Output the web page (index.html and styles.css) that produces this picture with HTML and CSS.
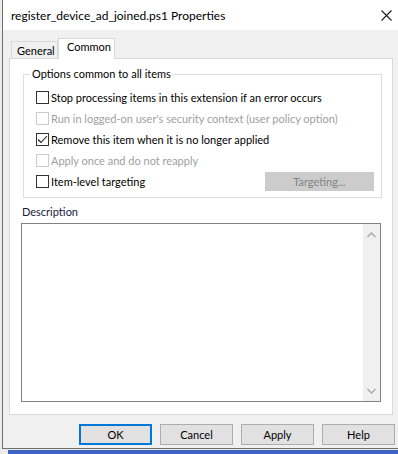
FILE: index.html
```html
<!DOCTYPE html>
<html lang="en">
<head>
    <meta charset="UTF-8">
    <meta name="viewport" content="width=device-width, initial-scale=1.0">
    <title>register_device_ad_joined.ps1 Properties</title>
    <link rel="stylesheet" href="styles.css">
</head>
<body>
    <div class="window">
        <div class="titlebar">
            <span class="title">register_device_ad_joined.ps1 Properties</span>
            <svg class="close" width="11" height="11" viewBox="0 0 11 11">
                <path d="M0.5 0.5 L10.5 10.5 M10.5 0.5 L0.5 10.5" stroke="#1a1a1a" stroke-width="1.1" fill="none"/>
            </svg>
        </div>
        <div class="main">
            <div class="tabs">
                <div class="tab">General</div>
                <div class="tab active">Common</div>
            </div>
            <div class="page">
                <fieldset class="group">
                    <legend>Options common to all items</legend>
                    <div class="row">
                        <span class="check"></span>
                        <span>Stop processing items in this extension if an error occurs</span>
                    </div>
                    <div class="row disabled">
                        <span class="check"></span>
                        <span>Run in logged-on user's security context (user policy option)</span>
                    </div>
                    <div class="row">
                        <span class="check">
                            <svg width="11" height="11" viewBox="0 0 11 11">
                                <polyline points="1,5.5 4,8.5 10,2" stroke="#1a1a1a" stroke-width="1.1" fill="none"/>
                            </svg>
                        </span>
                        <span>Remove this item when it is no longer applied</span>
                    </div>
                    <div class="row disabled">
                        <span class="check"></span>
                        <span>Apply once and do not reapply</span>
                    </div>
                    <div class="row">
                        <span class="check"></span>
                        <span>Item-level targeting</span>
                        <button class="targeting" disabled>Targeting...</button>
                    </div>
                </fieldset>
                <div class="desc-label">Description</div>
                <div class="desc">
                    <div class="desc-text"></div>
                    <div class="scrollbar">
                        <svg width="9" height="6" viewBox="0 0 9 6"><polyline points="0.5,5 4.5,1 8.5,5" stroke="#a6a6a6" stroke-width="1.3" fill="none"/></svg>
                        <svg width="9" height="6" viewBox="0 0 9 6"><polyline points="0.5,1 4.5,5 8.5,1" stroke="#a6a6a6" stroke-width="1.3" fill="none"/></svg>
                    </div>
                </div>
            </div>
            <div class="buttons">
                <button class="btn default">OK</button>
                <button class="btn">Cancel</button>
                <button class="btn">Apply</button>
                <button class="btn">Help</button>
            </div>
        </div>
    </div>
    <div class="taskbar"></div>
</body>
</html>
```

FILE: styles.css
```css
body { margin: 0; background: #ececec; font-family: Lato, sans-serif; font-size: 11px; color: #000; overflow: hidden; white-space: nowrap; }
.window { margin-left: 2px; height: 449px; box-sizing: border-box; border-left: 1px solid #6f6f6f; border-bottom: 1px solid #6f6f6f; background: #f0f0f0; }
.titlebar { height: 30px; background: #fff; display: flex; align-items: center; justify-content: space-between; padding: 0 8px 0 8px; }
.title { font-size: 12px; }
.close { margin-right: -2px; }
.main { padding: 7px 0 0 6px; }
.tabs { display: flex; align-items: flex-end; height: 21px; padding-left: 2px; position: relative; z-index: 1; }
.tab { box-sizing: border-box; height: 17px; width: 47px; border: 1px solid #d9d9d9; border-bottom: none; background: #f0f0f0; padding-left: 5px; line-height: 17px; }
.tab.active { height: 21px; width: 57px; background: #fff; padding-left: 8px; line-height: 16px; margin-bottom: -1px; }
.page { box-sizing: border-box; width: 384px; height: 357px; border: 1px solid #d9d9d9; background: #fff; padding-top: 7px; }
.group { margin: 0 10px 0 13px; padding: 5px 0 5px 12px; border: 1px solid #dcdcdc; min-width: 0; }
.group legend { margin-left: -6px; padding: 0 2px; line-height: 16px; }
.row { display: flex; align-items: center; height: 21px; }
.check { box-sizing: border-box; flex: none; width: 13px; height: 13px; border: 1px solid #333; background: #fff; margin-right: 2px; display: flex; align-items: center; justify-content: center; }
.row.disabled { color: #a0a0a0; }
.row.disabled .check { border-color: #cccccc; }
.targeting { margin-left: auto; margin-right: 7px; width: 109px; height: 19px; border: 1px solid #cccccc; background: #cccccc; color: #838383; font-family: inherit; font-size: 11px; padding: 0; }
.desc-label { padding-left: 12px; margin-top: 6px; line-height: 16px; color: #1a1a3a; }
.desc { box-sizing: border-box; margin: 3px 0 0 11px; width: 360px; height: 179px; border: 1px solid #828282; display: flex; }
.desc-text { flex: 1; }
.scrollbar { width: 17px; background: #f0f0f0; display: flex; flex-direction: column; justify-content: space-between; align-items: center; padding: 8px 0 7px; }
.buttons { display: flex; justify-content: flex-end; gap: 8px; padding-right: 3px; margin-top: 9px; }
.btn { box-sizing: border-box; width: 73px; height: 21px; border: 1px solid #adadad; background: #e1e1e1; font-family: inherit; font-size: 11px; padding: 0; color: #000; }
.btn.default { border-color: #0078d7; box-shadow: inset 0 0 0 1px #0078d7; }
.taskbar { margin: 1px 0 0 8px; height: 4px; background: #3f63c4; }
```
